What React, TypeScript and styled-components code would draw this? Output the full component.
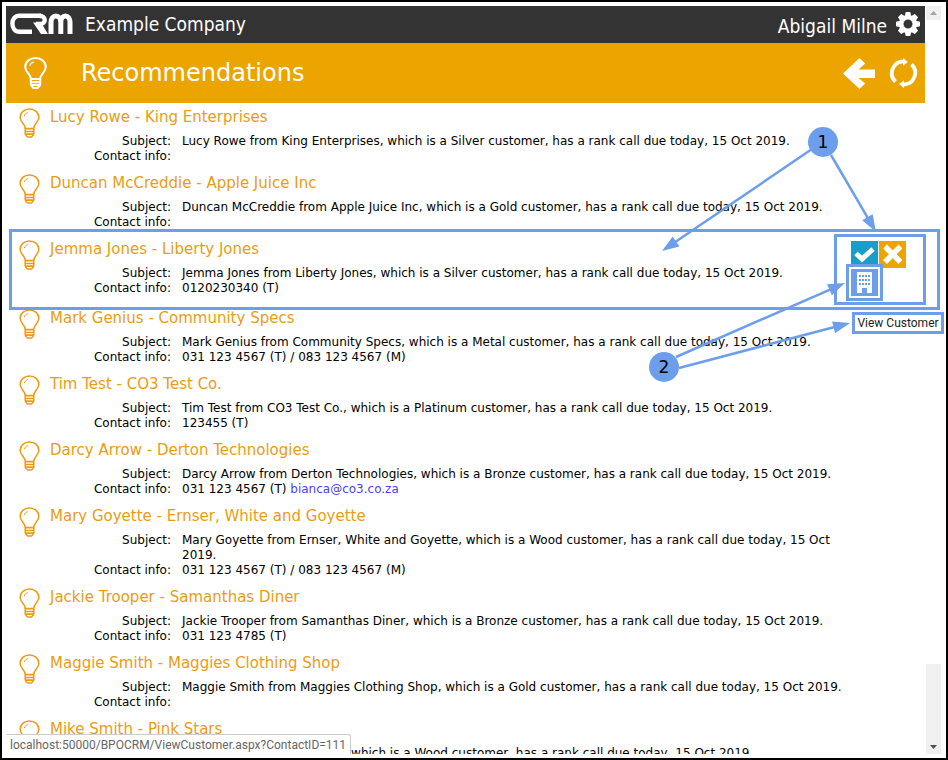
import React from "react";
import styled, { createGlobalStyle } from "styled-components";

const annotation = "#6d9eeb";

const Global = createGlobalStyle`
  * { box-sizing: border-box; }
  html, body { margin: 0; padding: 0; background: #fff; }
  body { font-family: "DejaVu Sans", Verdana, sans-serif; font-size: 12px; color: #000; }
  button { font: inherit; border: 0; padding: 0; background: none; color: inherit; cursor: pointer; }
  a { text-decoration: none; }
  svg { display: block; }
`;

const Frame = styled.div`
  position: relative;
  display: flex;
  height: 100vh;
  padding: 4px 5px 4px 4px;
  border: 2px solid #000;
  overflow: hidden;
`;

const Page = styled.div`
  flex: 1;
  min-width: 0;
  overflow: hidden;
`;

const TopBar = styled.header`
  display: flex;
  align-items: center;
  height: 37px;
  padding: 0 5px 2px 4px;
  background: #333;
  color: #fff;
  font-family: "DejaVu Sans Condensed", "DejaVu Sans", Tahoma, sans-serif;
  font-stretch: condensed;
  font-size: 19px;
`;

const Company = styled.span`
  flex: 1;
  padding-left: 12px;
`;

const User = styled.span`
  margin-right: 9px;
  padding-top: 4px;
`;

const Banner = styled.div`
  display: flex;
  align-items: center;
  height: 60px;
  padding: 0 7px 0 18px;
  background: #eca400;
  color: #fff;
`;

const Heading = styled.h1`
  flex: 1;
  margin: 0;
  padding-left: 34px;
  font-size: 24px;
  font-weight: normal;
`;

const BannerButton = styled.button`
  margin-left: 14px;
`;

const List = styled.ul`
  margin: 0;
  padding: 0;
  list-style: none;
`;

const Row = styled.li<{ $active?: boolean }>`
  display: grid;
  grid-template-columns: 44px minmax(0, 1fr) 81px;
  padding: 5px 0 ${(p) => (p.$active ? 8 : 5)}px;
`;

const RowIcon = styled.span`
  padding-left: 13px;
  color: #eb9c13;
`;

const Title = styled.a`
  display: block;
  color: #eb9c13;
  font-size: 15px;
  line-height: 18px;
`;

const Details = styled.dl`
  display: grid;
  grid-template-columns: 121px minmax(0, 1fr);
  column-gap: 11px;
  margin: 8px 0 0;
  line-height: 15px;
`;

const Label = styled.dt`
  text-align: right;
`;

const Value = styled.dd`
  margin: 0;
`;

const Mail = styled.a`
  color: #4b3ff0;
`;

const Actions = styled.div`
  display: flex;
  flex-wrap: wrap;
  align-content: flex-start;
  gap: 1px;
  height: 56px;
  padding: 1px 0 0 7px;
`;

const Action = styled.button<{ $color: string; $ringed?: boolean }>`
  display: flex;
  align-items: center;
  justify-content: center;
  width: 27px;
  height: 27px;
  background: ${(p) => p.$color};
  box-shadow: ${(p) => (p.$ringed ? `0 0 0 2px #fff, 0 0 0 5px ${annotation}` : "none")};
`;

const ScrollTrack = styled.div`
  display: flex;
  flex-direction: column;
  justify-content: space-between;
  width: 15px;
  margin-left: 1px;
`;

const ScrollEnd = styled.div<{ $height: number; $color: string }>`
  display: flex;
  align-items: flex-end;
  justify-content: center;
  height: ${(p) => p.$height}px;
  padding-bottom: 5px;
  background: #f0f0f0;
  color: ${(p) => p.$color};
`;

const StatusBar = styled.div`
  position: absolute;
  left: 4px;
  bottom: 4px;
  height: 20px;
  padding: 0 4px;
  border: 1px solid #ccc;
  border-left: 0;
  border-bottom: 0;
  border-radius: 0 3px 0 0;
  background: #fff;
  color: #666;
  font: 12px/20px Roboto, "Segoe UI", sans-serif;
`;

const Overlay = styled.div`
  position: absolute;
  inset: -2px;
  pointer-events: none;
`;

const Arrows = styled.svg`
  position: absolute;
  top: 120px;
  right: 0;
`;

const Outline = styled.div`
  position: absolute;
  border: 3px solid ${annotation};
`;

const RowOutline = styled(Outline)`
  top: 229px;
  left: 9px;
  right: 8px;
  height: 81px;
`;

const ActionsOutline = styled(Outline)`
  top: 234px;
  right: 22px;
  width: 92px;
  height: 71px;
`;

const Tooltip = styled(Outline)`
  top: 312px;
  right: 4px;
  width: 92px;
  height: 22px;
  background: #fff;
  color: #222;
  text-align: center;
  font: 12px/16px Roboto, "Segoe UI", sans-serif;
`;

const Marker = styled.div<{ $top: number; $right: number }>`
  position: absolute;
  top: ${(p) => p.$top}px;
  right: ${(p) => p.$right}px;
  width: 30px;
  height: 30px;
  border-radius: 50%;
  background: ${annotation};
  text-align: center;
  font: 17px/30px "DejaVu Sans", Verdana, sans-serif;
`;

const Bulb = ({ w, h, s }: { w: number; h: number; s: number }) => (
  <svg width={w} height={h} viewBox="0 0 22 31" fill="none" stroke="currentColor" strokeWidth={s} preserveAspectRatio="none">
    <path d="M6.500 21C6.500 16.500 1.200 15 1.200 9.600C1.200 4.800 5.400 1 11 1S20.800 4.800 20.800 9.600C20.800 15 15.500 16.500 15.500 21V26.500C15.500 28 14 29 13 30H9C8 29 6.500 28 6.500 26.500Z" />
    <path d="M6.500 21.300H15.500M6.700 24.200H15.300M7 27H15" />
    <path d="M5.500 8.500C6 6.500 7.500 5.200 9.500 4.800" strokeWidth="1" />
  </svg>
);

const Logo = () => (
  <svg width="63" height="22" viewBox="0 0 63 22" fill="none" stroke="#fff" role="img" aria-label="CRM">
    <path strokeWidth="4.400" d="M31 2.700H9.500C5 2.700 2.400 6 2.400 10.500S5 18.800 9.500 18.800H22" />
    <path strokeWidth="4.400" d="M29 2.700C36.500 2.700 36.500 11 30 11H26" />
    <path fill="#fff" stroke="none" d="M23 9.500H31L38 21H31Z" />
    <path strokeWidth="5" d="M41 21V9.500C41 .8 50.800 .8 50.800 9.500V21M50.800 9.500C50.800 .8 60 .8 60 9.500V21" />
  </svg>
);

const Gear = () => (
  <svg width="24" height="24" viewBox="-12 -12 24 24" fill="#fff">
    {[0, 45, 90, 135, 180, 225, 270, 315].map((a) => (
      <path key={a} transform={`rotate(${a})`} d="M-3.200 -8L-2.300 -12H2.300L3.200 -8Z" />
    ))}
    <circle r="6.800" fill="none" stroke="#fff" strokeWidth="4.600" />
  </svg>
);

const BackArrow = () => (
  <svg width="32" height="31" viewBox="0 0 31 31" fill="#fff" preserveAspectRatio="none">
    <path d="M0 15.500L16 0L21.500 5.500L15 11.500H31V20H15L21.500 25.500L16 31Z" />
  </svg>
);

const Refresh = () => (
  <svg width="29" height="32" viewBox="-15 -16 30 32">
    {[0, 180].map((a) => (
      <g key={a} transform={`rotate(${a})`}>
        <path d="M-8.300 9A12.200 12.200 0 0 1 0 -12" fill="none" stroke="#fff" strokeWidth="4" />
        <path d="M-0.500 -15.800L4.500 -11.500L-0.500 -7.500Z" fill="#fff" />
      </g>
    ))}
  </svg>
);

const Check = () => (
  <svg width="27" height="27" viewBox="0 0 27 27" fill="none" stroke="#fff" strokeWidth="5">
    <path d="M5 12.500L11 18L22 8" />
  </svg>
);

const Cross = () => (
  <svg width="27" height="27" viewBox="0 0 27 27" fill="none" stroke="#fff" strokeWidth="5.500">
    <path d="M6 5.500L21.500 21M21.500 5.500L6 21" />
  </svg>
);

const Building = () => (
  <svg width="15" height="21" viewBox="0 0 15 21">
    <path fill="#fff" d="M0 0H15V21H10V16H5V21H0Z" />
    {[3, 7, 11].map((y) =>
      [2, 5, 8, 11].map((x) => <rect key={`${x}-${y}`} x={x} y={y} width="2" height="2" fill={annotation} />)
    )}
  </svg>
);

const Caret = ({ up }: { up?: boolean }) => (
  <svg width="7" height="4" viewBox="0 0 7 4" fill="currentColor">
    <path d={up ? "M0 4L3.500 0L7 4Z" : "M0 0H7L3.500 4Z"} />
  </svg>
);

const lines = [
  [812, 149, 662, 251],
  [831, 155, 876, 232],
  [676, 357, 845, 283],
  [679, 368, 850, 323],
];

const Pointer = ({ line: [x1, y1, x2, y2] }: { line: number[] }) => {
  const angle = (Math.atan2(y2 - y1, x2 - x1) * 180) / Math.PI;
  const length = Math.hypot(x2 - x1, y2 - y1);
  return (
    <g transform={`translate(${x1} ${y1}) rotate(${angle})`}>
      <path d={`M0 0H${length - 12}`} stroke={annotation} strokeWidth="2.500" />
      <path d={`M${length} 0l-17 -6v12z`} fill={annotation} />
    </g>
  );
};

const people = [
  { name: "Lucy Rowe", company: "King Enterprises", rank: "Silver", info: "" },
  { name: "Duncan McCreddie", company: "Apple Juice Inc", rank: "Gold", info: "" },
  { name: "Jemma Jones", company: "Liberty Jones", rank: "Silver", info: "0120230340 (T)", active: true },
  { name: "Mark Genius", company: "Community Specs", rank: "Metal", info: "031 123 4567 (T) / 083 123 4567 (M)" },
  { name: "Tim Test", company: "CO3 Test Co.", rank: "Platinum", info: "123455 (T)" },
  { name: "Darcy Arrow", company: "Derton Technologies", rank: "Bronze", info: "031 123 4567 (T)", mail: "bianca@co3.co.za" },
  { name: "Mary Goyette", company: "Ernser, White and Goyette", rank: "Wood", info: "031 123 4567 (T) / 083 123 4567 (M)" },
  { name: "Jackie Trooper", company: "Samanthas Diner", rank: "Bronze", info: "031 123 4785 (T)" },
  { name: "Maggie Smith", company: "Maggies Clothing Shop", rank: "Gold", info: "" },
  { name: "Mike Smith", company: "Pink Stars", rank: "Wood", info: "" },
];

export default function App() {
  return (
    <Frame>
      <Global />
      <Page>
        <TopBar>
          <Logo />
          <Company>Example Company</Company>
          <User>Abigail Milne</User>
          <button aria-label="Settings"><Gear /></button>
        </TopBar>
        <Banner>
          <Bulb w={23} h={32} s={2} />
          <Heading>Recommendations</Heading>
          <BannerButton aria-label="Back"><BackArrow /></BannerButton>
          <BannerButton aria-label="Refresh"><Refresh /></BannerButton>
        </Banner>
        <List>
          {people.map((p) => (
            <Row key={p.name} $active={p.active}>
              <RowIcon><Bulb w={21} h={30} s={1.6} /></RowIcon>
              <div>
                <Title href="#">{p.name} - {p.company}</Title>
                <Details>
                  <Label>Subject:</Label>
                  <Value>{p.name} from {p.company}, which is a {p.rank} customer, has a rank call due today, 15 Oct 2019.</Value>
                  <Label>Contact info:</Label>
                  <Value>{p.info} {p.mail && <Mail href={`mailto:${p.mail}`}>{p.mail}</Mail>}</Value>
                </Details>
              </div>
              {p.active && (
                <Actions>
                  <Action $color="#189fc8" aria-label="Complete"><Check /></Action>
                  <Action $color="#eca400" aria-label="Dismiss"><Cross /></Action>
                  <Action $color={annotation} $ringed aria-label="View Customer"><Building /></Action>
                </Actions>
              )}
            </Row>
          ))}
        </List>
      </Page>
      <ScrollTrack>
        <ScrollEnd $height={14} $color="#a3a3a3"><Caret up /></ScrollEnd>
        <ScrollEnd $height={90} $color="#505050"><Caret /></ScrollEnd>
      </ScrollTrack>
      <StatusBar>localhost:50000/BPOCRM/ViewCustomer.aspx?ContactID=111</StatusBar>
      <Overlay>
        <RowOutline />
        <ActionsOutline />
        <Arrows width="308" height="280" viewBox="640 120 308 280">
          {lines.map((line) => <Pointer key={line.join()} line={line} />)}
        </Arrows>
        <Tooltip role="tooltip">View Customer</Tooltip>
        <Marker $top={127} $right={110}>1</Marker>
        <Marker $top={352} $right={269}>2</Marker>
      </Overlay>
    </Frame>
  );
}
